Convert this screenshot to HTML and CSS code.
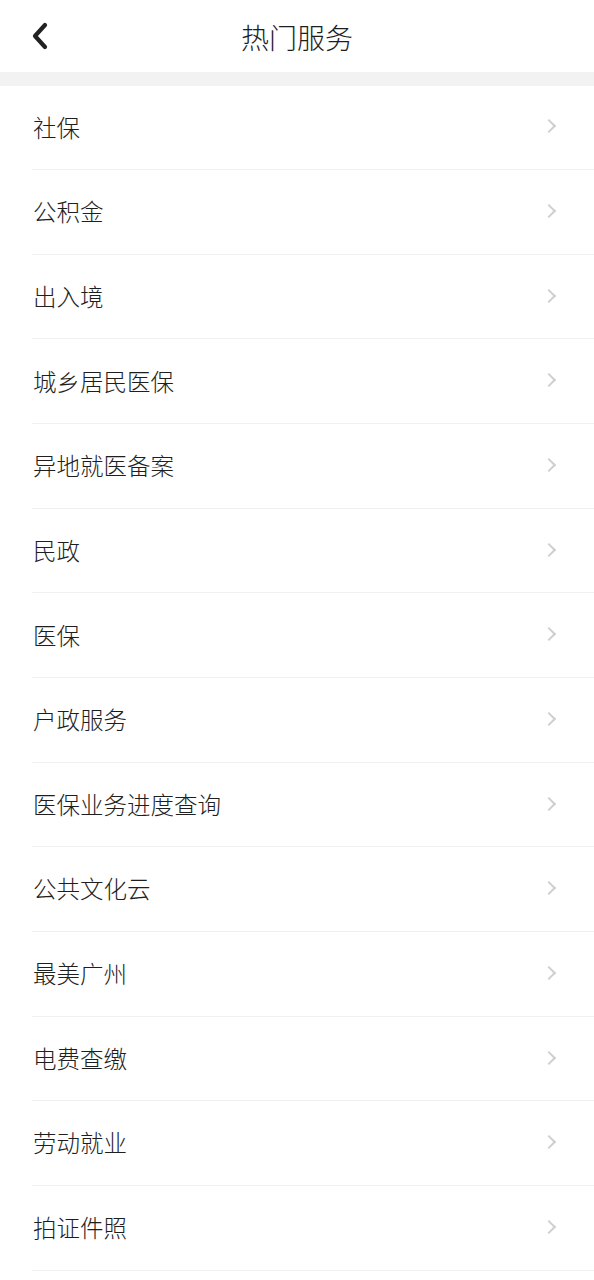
FILE: index.html
```html
<!DOCTYPE html>
<html lang="zh-CN">
<head>
<meta charset="utf-8">
<title>热门服务</title>
<link rel="stylesheet" href="styles.css">
</head>
<body>
<header class="topbar">
  <span class="back">
    <svg width="18" height="28" viewBox="0 0 18 28"><path d="M14 3 L4 14 L14 25" fill="none" stroke="#222" stroke-width="4.2" stroke-linecap="round" stroke-linejoin="round"/></svg>
  </span>
  <h1 class="title">热门服务</h1>
</header>
<div class="band"></div>
<ul class="list">
  <li class="item"><span class="label">社保</span><span class="chev"></span></li>
  <li class="item"><span class="label">公积金</span><span class="chev"></span></li>
  <li class="item"><span class="label">出入境</span><span class="chev"></span></li>
  <li class="item"><span class="label">城乡居民医保</span><span class="chev"></span></li>
  <li class="item"><span class="label">异地就医备案</span><span class="chev"></span></li>
  <li class="item"><span class="label">民政</span><span class="chev"></span></li>
  <li class="item"><span class="label">医保</span><span class="chev"></span></li>
  <li class="item"><span class="label">户政服务</span><span class="chev"></span></li>
  <li class="item"><span class="label">医保业务进度查询</span><span class="chev"></span></li>
  <li class="item"><span class="label">公共文化云</span><span class="chev"></span></li>
  <li class="item"><span class="label">最美广州</span><span class="chev"></span></li>
  <li class="item"><span class="label">电费查缴</span><span class="chev"></span></li>
  <li class="item"><span class="label">劳动就业</span><span class="chev"></span></li>
  <li class="item"><span class="label">拍证件照</span><span class="chev"></span></li>
</ul>
</body>
</html>
```
FILE: styles.css
```css
html, body {
  margin: 0;
  padding: 0;
  background: #fff;
  font-family: "Noto Sans CJK SC", "Noto Sans", sans-serif;
  color: #222;
}
.topbar {
  position: relative;
  height: 72px;
  display: flex;
  align-items: center;
  justify-content: center;
}
.back {
  position: absolute;
  left: 31px;
  top: 22px;
  width: 18px;
  height: 28px;
  display: flex;
}
.title {
  margin: 0;
  font-size: 28px;
  font-weight: 300;
  color: #1e1e1e;
  line-height: 1;
  margin-top: 1px;
}
.band {
  height: 13.5px;
  background: #f2f2f2;
}
.list {
  list-style: none;
  margin: 0;
  padding: 0 0 0 32px;
}
.item {
  height: 83.67px;
  border-bottom: 1px solid #f0f0f0;
  display: flex;
  align-items: center;
  justify-content: space-between;
  padding-left: 1px;
  padding-right: 38px;
}
.label {
  font-size: 23.5px;
  font-weight: 300;
  line-height: 1;
  color: #1e1e1e;
}
.chev {
  width: 8px;
  height: 8px;
  border-top: 2px solid #cfcfcf;
  border-right: 2px solid #cfcfcf;
  transform: rotate(45deg);
  margin-right: 2px;
  margin-top: -2px;
}
```
